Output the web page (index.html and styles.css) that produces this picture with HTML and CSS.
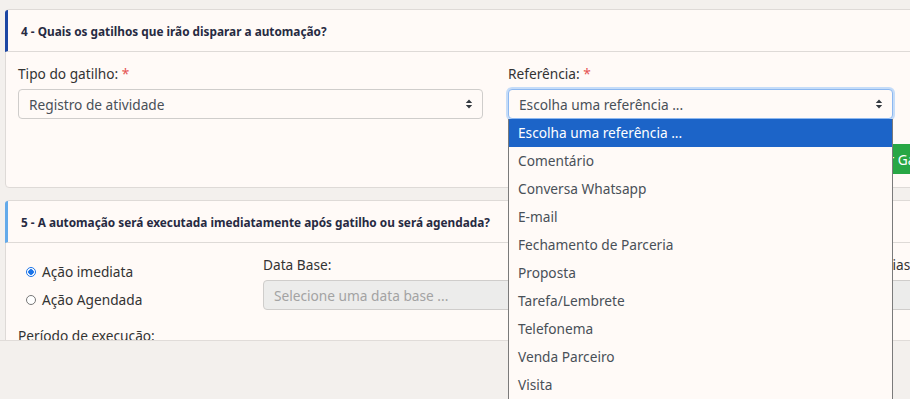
FILE: index.html
```html
<!DOCTYPE html>
<html lang="pt-BR">
<head>
    <meta charset="UTF-8">
    <title>Automação | Gatilhos</title>
    <link rel="stylesheet" href="styles.css">
</head>
<body>
    <main class="page">

        <!-- Passo 4: gatilhos -->
        <section class="card">
            <div class="card-header accent-dark">
                <h2>4 - Quais os gatilhos que irão disparar a automação?</h2>
            </div>
            <div class="card-body trigger-row">
                <div class="field col-type">
                    <label>Tipo do gatilho: <span class="req">*</span></label>
                    <div class="select">
                        <span>Registro de atividade</span>
                        <svg class="caret" width="8" height="10" viewBox="0 0 8 10"><path d="M4 0.5 7.2 4H0.8zM4 9.5 0.8 6h6.4z" fill="#343a40"/></svg>
                    </div>
                </div>
                <div class="field col-ref">
                    <label>Referência: <span class="req">*</span></label>
                    <div class="select focused">
                        <span>Escolha uma referência ...</span>
                        <svg class="caret" width="8" height="10" viewBox="0 0 8 10"><path d="M4 0.5 7.2 4H0.8zM4 9.5 0.8 6h6.4z" fill="#343a40"/></svg>
                    </div>
                    <ul class="dropdown">
                        <li class="active">Escolha uma referência ...</li>
                        <li>Comentário</li>
                        <li>Conversa Whatsapp</li>
                        <li>E-mail</li>
                        <li>Fechamento de Parceria</li>
                        <li>Proposta</li>
                        <li>Tarefa/Lembrete</li>
                        <li>Telefonema</li>
                        <li>Venda Parceiro</li>
                        <li>Visita</li>
                    </ul>
                </div>
                <div class="col-btn">
                    <button class="btn-success">+ Adicionar Gatilho</button>
                </div>
            </div>
        </section>

        <!-- Passo 5: agendamento -->
        <section class="card">
            <div class="card-header accent-light">
                <h2>5 - A automação será executada imediatamente após gatilho ou será agendada?</h2>
            </div>
            <div class="card-body schedule">
                <div class="schedule-row">
                    <div class="radios">
                        <label class="radio"><span class="dot checked"></span>Ação imediata</label>
                        <label class="radio"><span class="dot"></span>Ação Agendada</label>
                    </div>
                    <div class="field col-base">
                        <label>Data Base:</label>
                        <div class="select disabled"><span>Selecione uma data base ...</span></div>
                    </div>
                    <div class="field col-days">
                        <label>Quantidade de dias:</label>
                        <div class="select disabled"><span></span></div>
                    </div>
                </div>
                <label class="period">Período de execução:</label>
            </div>
        </section>
    </main>

    <footer class="footer"></footer>
</body>
</html>
```

FILE: styles.css
```css
:root {
    --page-bg: #f3f0ed;
    --card-bg: #fffaf7;
    --border: #dedad7;
    --text: #333333;
    --muted: #495057;
    --heading: #272a42;
    --primary: #1c64c8;
}

* {
    margin: 0;
    padding: 0;
    box-sizing: border-box;
}

body {
    background: var(--page-bg);
    font-family: 'Noto Sans', 'Open Sans', sans-serif;
    font-size: 13.7px;
    color: var(--text);
    overflow: hidden;
    height: 399px;
}

.page {
    width: 1100px;
    padding: 9px 0 0 5px;
}

/* Cards */
.card {
    background: var(--card-bg);
    border: 1px solid var(--border);
    border-radius: 4px;
    margin-bottom: 12px;
}

.card-header {
    height: 42px;
    display: flex;
    align-items: center;
    padding-left: 13px;
    border-bottom: 1px solid var(--border);
    margin-left: -1px;
    border-top-left-radius: 3px;
}

.card-header h2 {
    font-size: 11.8px;
    font-weight: 700;
    color: var(--heading);
}

.accent-dark { border-left: 3px solid #1b46a3; }
.accent-light { border-left: 3px solid #63aaea; }

.card-body {
    padding: 14px 12px 0;
}

/* Fields */
.field label {
    display: block;
    margin-bottom: 7px;
    line-height: 16px;
    white-space: nowrap;
}

.req { color: #e55353; }

.select {
    height: 30px;
    border: 1px solid #cfcdcb;
    border-radius: 4px;
    background: var(--card-bg);
    display: flex;
    align-items: center;
    justify-content: space-between;
    padding: 0 9px 0 10px;
    color: var(--muted);
}

.select.focused {
    border-color: #8db8f0;
    box-shadow: 0 0 0 2px #c5dcf8;
}

.select.disabled {
    background: #ececeb;
    color: #a3a3a3;
}

/* Passo 4 */
.trigger-row {
    display: grid;
    grid-template-columns: 465px 385px 200px;
    column-gap: 25px;
    height: 135px;
}

.col-ref {
    position: relative;
}

.col-btn {
    padding-top: 78px;
    margin-left: -108px;
}

.btn-success {
    background: #28a745;
    color: #fff;
    border: none;
    border-radius: 3px;
    height: 30px;
    padding: 0 12px;
    font: inherit;
    white-space: nowrap;
}

.dropdown {
    position: absolute;
    top: 53px;
    left: 0;
    width: 385px;
    list-style: none;
    background: var(--card-bg);
    border: 1px solid #7a7a7a;
    border-top: none;
    z-index: 10;
}

.dropdown li {
    height: 28px;
    line-height: 28px;
    padding-left: 9px;
    color: var(--muted);
}

.dropdown li.active {
    background: var(--primary);
    color: #fff;
}

/* Passo 5 */
.schedule {
    height: 120px;
}

.schedule-row {
    display: grid;
    grid-template-columns: 245px 440px 211px;
}

.radios {
    padding: 6px 0 0 8px;
    display: flex;
    flex-direction: column;
    gap: 11px;
}

.radio {
    display: flex;
    align-items: center;
    gap: 6px;
    line-height: 17px;
}

.dot {
    width: 10px;
    height: 10px;
    border-radius: 50%;
    border: 1px solid #777;
    background: #fff;
}

.dot.checked {
    border-color: #1a73e8;
    background: radial-gradient(circle, #1a73e8 0 2.5px, #fff 3px);
}

.col-days label {
    text-align: right;
}

.period {
    display: block;
    margin-top: 16px;
}

/* Rodapé fixo */
.footer {
    position: fixed;
    left: 0;
    right: 0;
    bottom: 0;
    height: 59px;
    background: var(--page-bg);
    border-top: 1px solid #e0dcd9;
    z-index: 5;
}
```
